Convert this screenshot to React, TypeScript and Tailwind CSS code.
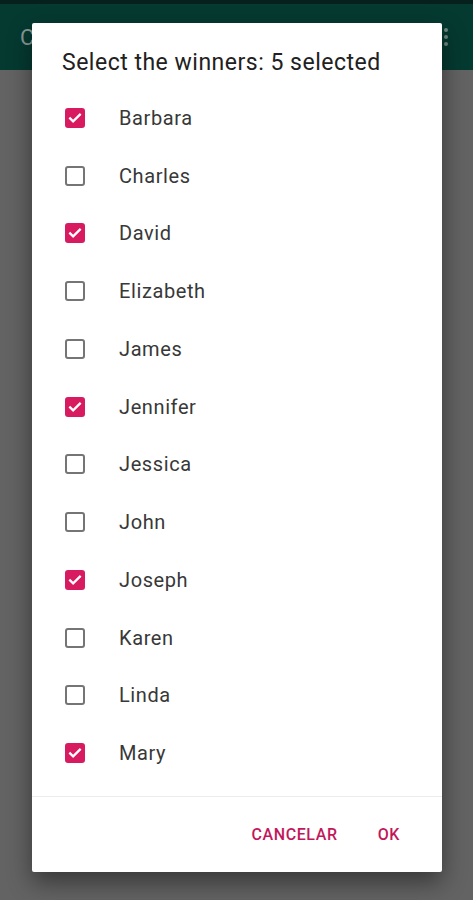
import { useState } from "react";

const names = [
  "Barbara",
  "Charles",
  "David",
  "Elizabeth",
  "James",
  "Jennifer",
  "Jessica",
  "John",
  "Joseph",
  "Karen",
  "Linda",
  "Mary",
];

const initial = ["Barbara", "David", "Jennifer", "Joseph", "Mary"];

function Checkbox({ checked }: { checked: boolean }) {
  if (checked) {
    return (
      <div className="h-[20px] w-[20px] rounded-[3px] bg-[#d81b60] flex items-center justify-center">
        <svg viewBox="0 0 24 24" className="h-[18px] w-[18px]" fill="none" stroke="white" strokeWidth="3" strokeLinecap="square">
          <path d="M5.5 12.5l4 4 9-9" />
        </svg>
      </div>
    );
  }
  return <div className="h-[20px] w-[20px] rounded-[3px] border-2 border-[#757575]" />;
}

export default function App() {
  const [selected, setSelected] = useState<string[]>(initial);

  const toggle = (n: string) =>
    setSelected((s) => (s.includes(n) ? s.filter((x) => x !== n) : [...s, n]));

  return (
    <div className="relative h-[900px] w-[473px] overflow-hidden bg-[#636363] font-['Roboto',sans-serif]">
      {/* app bar behind the scrim */}
      <div className="h-[4px] bg-[#06211d]" />
      <div className="h-[66px] bg-[#053a31] flex items-center justify-between px-[20px]">
        <span className="text-[22px] text-[#8a9a96]">C</span>
        <div className="flex flex-col gap-[3px] pr-[5px]">
          <span className="h-[4px] w-[4px] rounded-full bg-[#6f8a84]" />
          <span className="h-[4px] w-[4px] rounded-full bg-[#6f8a84]" />
          <span className="h-[4px] w-[4px] rounded-full bg-[#6f8a84]" />
        </div>
      </div>

      <div className="absolute left-[32px] top-[23px] w-[410px] h-[849px] bg-white rounded-[2px] shadow-[0_10px_24px_rgba(0,0,0,0.45)] flex flex-col">
        <div className="pt-[26px] pl-[30px] text-[23px] leading-[28px] text-[#212121] tracking-[0.5px] whitespace-nowrap">
          Select the winners: {selected.length} selected
        </div>
        <div className="mt-[12px]">
          {names.map((n) => (
            <div
              key={n}
              onClick={() => toggle(n)}
              className="h-[57.75px] flex items-center cursor-pointer"
            >
              <div className="pl-[33px] w-[87px]">
                <Checkbox checked={selected.includes(n)} />
              </div>
              <span className="text-[20px] tracking-[0.6px] text-[#383838]">{n}</span>
            </div>
          ))}
        </div>
        <div className="mt-[14px] h-px bg-[#ececec]" />
        <div className="flex justify-end items-center gap-[40px] pr-[42px] h-[76px] pt-[2px]">
          <button className="text-[16px] font-medium text-[#c2185b] tracking-[0.6px]">CANCELAR</button>
          <button className="text-[16px] font-medium text-[#c2185b] tracking-[0.6px]">OK</button>
        </div>
      </div>
    </div>
  );
}
